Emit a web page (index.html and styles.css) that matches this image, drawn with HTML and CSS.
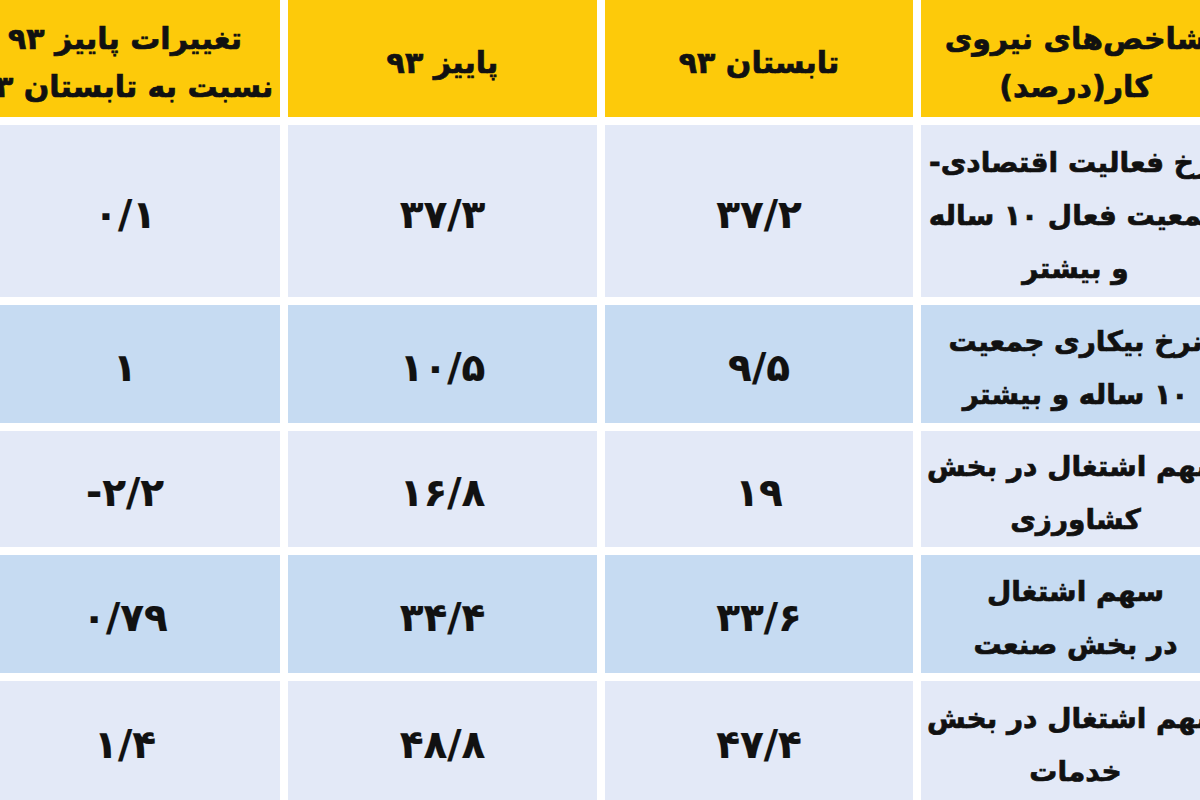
FILE: index.html
```html
<!DOCTYPE html>
<html lang="fa">
<head>
<meta charset="utf-8">
<title>شاخص‌های نیروی کار</title>
<link rel="stylesheet" href="styles.css">
</head>
<body>
<div class="frame">
  <div class="grid" dir="rtl">
    <div class="cell head two">شاخص&zwnj;های نیروی<br>کار(درصد)</div>
    <div class="cell head">تابستان ۹۳</div>
    <div class="cell head">پاییز ۹۳</div>
    <div class="cell head two">تغییرات پاییز ۹۳<br>نسبت به تابستان ۹۳</div>

    <div class="cell light label">نرخ فعالیت اقتصادی-<br>جمعیت فعال ۱۰ ساله<br>و بیشتر</div>
    <div class="cell light num">۳۷/۲</div>
    <div class="cell light num">۳۷/۳</div>
    <div class="cell light num">۰/۱</div>

    <div class="cell blue label">نرخ بیکاری جمعیت<br>۱۰ ساله و بیشتر</div>
    <div class="cell blue num">۹/۵</div>
    <div class="cell blue num">۱۰/۵</div>
    <div class="cell blue num">۱</div>

    <div class="cell light label">سهم اشتغال در بخش<br>کشاورزی</div>
    <div class="cell light num">۱۹</div>
    <div class="cell light num">۱۶/۸</div>
    <div class="cell light num"><span dir="ltr">-۲/۲</span></div>

    <div class="cell blue label">سهم اشتغال<br>در بخش صنعت</div>
    <div class="cell blue num">۳۳/۶</div>
    <div class="cell blue num">۳۴/۴</div>
    <div class="cell blue num">۰/۷۹</div>

    <div class="cell light label">سهم اشتغال در بخش<br>خدمات</div>
    <div class="cell light num">۴۷/۴</div>
    <div class="cell light num">۴۸/۸</div>
    <div class="cell light num">۱/۴</div>
  </div>
</div>
</body>
</html>
```

FILE: styles.css
```css
html, body {
  margin: 0;
  padding: 0;
  background: #ffffff;
}

.frame {
  width: 1200px;
  height: 800px;
  overflow: hidden;
  background: #ffffff;
}

.grid {
  width: 1260px;
  margin-left: -30px;
  display: grid;
  grid-template-columns: 309px 308px 309px 310px;
  grid-template-rows: 117px 172px 118px 116px 118px 120px;
  column-gap: 8px;
  row-gap: 8px;
  font-family: "DejaVu Sans", sans-serif;
  font-weight: bold;
  color: #111111;
  -webkit-text-stroke: 0.7px #111111;
}

.cell {
  display: flex;
  align-items: center;
  justify-content: center;
  text-align: center;
  box-sizing: border-box;
}

.head {
  background: #fdca0a;
  font-size: 30px;
  line-height: 48px;
  padding-top: 9px;
}

.light {
  background: #e3e9f7;
}

.blue {
  background: #c6dbf2;
}

.label {
  font-size: 28px;
  line-height: 53px;
  padding-top: 8px;
}

.num {
  font-size: 39px;
  line-height: 44px;
  padding-top: 8px;
  -webkit-text-stroke: 0.2px #111111;
}
```
